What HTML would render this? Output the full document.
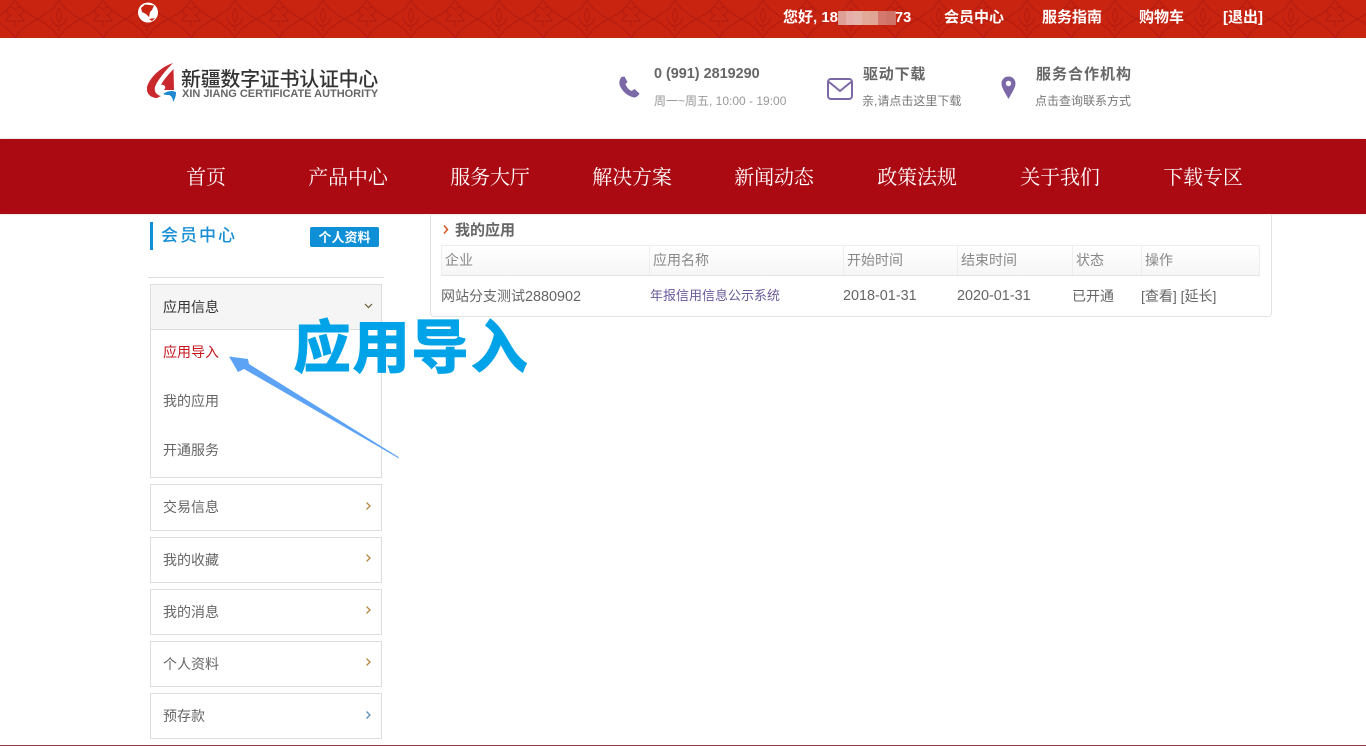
<!DOCTYPE html>
<html lang="zh-CN"><head><meta charset="utf-8"><title>我的应用</title>
<style>
*{box-sizing:border-box;margin:0;padding:0}
html,body{width:1366px;height:746px;overflow:hidden;background:#fff;font-family:"Liberation Sans","Noto Sans CJK SC",sans-serif;color:#666}
.a{position:absolute;white-space:nowrap}
.tl{color:#fff;font-size:15px;font-weight:bold;top:8px;line-height:20px}
#nav{left:0;top:139px;width:1366px;height:75px;background:#ab0a13;box-shadow:0 0 2px #ccc}
.n{top:164px;color:#fff;font:20px/28px "Liberation Serif","Noto Serif CJK SC",serif;width:100px;text-align:center;letter-spacing:-.1px}
.side{left:150px;width:232px;border:1px solid #ddd;background:#fff}
.s{left:163px;font-size:14px;line-height:20px;color:#666}
.th{top:251px;font-size:14px;line-height:18px;color:#888}
.td{top:287px;font-size:14px;line-height:18px;color:#666}
.sep{top:246px;width:1px;height:29px;background:#eee}
</style></head><body>
<svg class="a" style="left:0;top:0" width="1366" height="38"><defs><pattern id="p" width="88" height="38" patternUnits="userSpaceOnUse">
<g fill="none" stroke="#b51c10" stroke-width="1.200"><path d="M-29 38C-20 20 5 18 15 0C25 18 50 20 59 38C68 20 93 18 103 0M-29 0C-20 18 5 20 15 38C25 20 50 18 59 0C68 18 93 20 103 38"/>
<path d="M15 10c-3-4-8-3-8 1 0 3 3 4 5 4-3 1-5 3-6 6h18c-1-3-3-5-6-6 2 0 5-1 5-4 0-4-5-5-8-1zM15 21v6"/>
<path d="M59 8c-3 5-3 10 0 14 3-4 3-9 0-14zM51 17c1 5 4 8 8 9 4-1 7-4 8-9M59 26v5"/></g></pattern></defs>
<rect width="1366" height="38" fill="#c9240f"/><rect width="1366" height="38" fill="url(#p)"/></svg>
<svg class="a" style="left:138px;top:2px" width="20" height="21" viewBox="0 0 20 21"><circle cx="10" cy="10.500" r="10" fill="#fff"/><path d="M3 6L7 2.500 16 3.500 14 8 12 10 11 15 8 12 4 10ZM11 17L17 16 14 19Z" fill="#c8230f"/></svg>
<div class="a tl" style="left:783px">您好, 18</div>
<div class="a" style="left:838px;top:11px;width:58px;height:14px;background:linear-gradient(90deg,#dd9e96 0 8px,#e5aea8 8px 16px,#e4b4ab 16px 24px,#e2a898 24px 32px,#e0a595 32px 40px,#d4776c 40px 48px,#cf7268 48px)"></div>
<div class="a tl" style="left:895px;font-size:14.500px">73</div>
<div class="a tl" style="left:944px">会员中心</div>
<div class="a tl" style="left:1042px">服务指南</div>
<div class="a tl" style="left:1139px">购物车</div>
<div class="a tl" style="left:1223px">[退出]</div>

<svg class="a" style="left:147px;top:63px" width="30" height="40" viewBox="0 0 30 40"><path d="M26 0C14 4 3 14 0 24-1 30 3 35 10 35L14 33C9 32 7 28 8 24 10 18 18 8 26 0Z" fill="#c9282d"/><path d="M26.500 6L27 27H17C20 24 17 21 14 22 17 16 22 11 26.500 6Z" fill="#c9282d"/><path d="M16 31c4-3 9-4 13-2 0 4-1 7-3 10 0-3-1-6-4-7-2 0-4 0-6-1z" fill="#1e87d0"/></svg>
<div class="a" style="left:181px;top:68px;font-size:20px;line-height:24px;color:#333;font-weight:500;letter-spacing:-.3px">新疆数字证书认证中心</div>
<div class="a" style="left:182px;top:88px;font-size:11px;line-height:12px;font-weight:bold;color:#666;letter-spacing:-.02px">XIN JIANG CERTIFICATE AUTHORITY</div>

<svg class="a" style="left:618px;top:76px" width="22" height="22" viewBox="0 0 22 22"><path d="M3.500 1C1 4 .5 8 3 12 6 17 11 20.500 16 21.500 18 21.500 20.500 20 21.500 17.500L16.500 13 13.500 15C10.500 13.500 8.500 11 7.500 8L9.500 6 6.500 .5Z" fill="#7b68a6"/></svg>
<div class="a" style="left:654px;top:65px;font-size:14.400px;line-height:18px;font-weight:bold;color:#666">0 (991) 2819290</div>
<div class="a" style="left:654px;top:92px;font-size:12px;line-height:18px;color:#999">周一~周五, 10:00 - 19:00</div>
<svg class="a" style="left:827px;top:78px" width="26" height="22" viewBox="0 0 26 22"><rect x="1" y="1" width="24" height="20" rx="3" fill="none" stroke="#7b68a6" stroke-width="2"/><path d="M2 4l11 9 11-9" fill="none" stroke="#7b68a6" stroke-width="2"/></svg>
<div class="a" style="left:863px;top:66px;font-size:15px;line-height:18px;font-weight:bold;color:#666;letter-spacing:.8px">驱动下载</div>
<div class="a" style="left:862px;top:92px;font-size:12px;line-height:18px;color:#777">亲,请点击这里下载</div>
<svg class="a" style="left:1001px;top:76px" width="15" height="24" viewBox="0 0 15 24"><path d="M7.500 .5C3 .5 .5 4 .5 7.500c0 4 4 10 7 15.500 3-5.500 7-11.500 7-15.500C14.500 4 12 .5 7.500 .5z" fill="#7b68a6"/><circle cx="7.500" cy="7.500" r="2.700" fill="#fff"/></svg>
<div class="a" style="left:1036px;top:66px;font-size:15px;line-height:18px;font-weight:bold;color:#666;letter-spacing:1px">服务合作机构</div>
<div class="a" style="left:1035px;top:92px;font-size:12px;line-height:18px;color:#777">点击查询联系方式</div>

<div class="a" id="nav"></div>
<div class="a n" style="left:156px">首页</div>
<div class="a n" style="left:298px">产品中心</div>
<div class="a n" style="left:440px">服务大厅</div>
<div class="a n" style="left:582px">解决方案</div>
<div class="a n" style="left:724px">新闻动态</div>
<div class="a n" style="left:867px">政策法规</div>
<div class="a n" style="left:1010px">关于我们</div>
<div class="a n" style="left:1153px">下载专区</div>

<div class="a" style="left:150px;top:222px;width:3px;height:28px;background:#0f8fd5"></div>
<div class="a" style="left:161px;top:225px;font-size:17px;line-height:22px;color:#1a8fd6;letter-spacing:2px;font-weight:500">会员中心</div>
<div class="a" style="left:310px;top:227px;width:69px;height:20px;background:#0f8fd5;border-radius:2px;color:#fff;font-size:13px;font-weight:bold;line-height:21px;text-align:center">个人资料</div>
<div class="a" style="left:148px;top:277px;width:236px;height:1px;background:#ddd"></div>

<div class="a side" style="top:284px;height:194px"></div>
<div class="a" style="left:151px;top:285px;width:230px;height:45px;background:#f5f5f5;border-bottom:1px solid #ddd"></div>
<div class="a s" style="top:297px;color:#333">应用信息</div>
<svg class="a" style="left:364px;top:303px" width="9" height="6"><path d="M1 1l3.500 3.500L8 1" fill="none" stroke="#6a5a35" stroke-width="1.200"/></svg>
<div class="a s" style="top:342px;color:#c4161c">应用导入</div>
<div class="a s" style="top:391px">我的应用</div>
<div class="a s" style="top:440px">开通服务</div>

<div class="a side" style="top:484px;height:47px"></div><div class="a s" style="top:497px">交易信息</div>
<div class="a side" style="top:537px;height:46px"></div><div class="a s" style="top:550px">我的收藏</div>
<div class="a side" style="top:589px;height:46px"></div><div class="a s" style="top:602px">我的消息</div>
<div class="a side" style="top:641px;height:46px"></div><div class="a s" style="top:654px">个人资料</div>
<div class="a side" style="top:693px;height:46px"></div><div class="a s" style="top:706px">预存款</div>
<svg class="a" style="left:365px;top:501px" width="7" height="10"><path d="M1.500 1.500l3.500 3.500-3.500 3.500" fill="none" stroke="#b98a45" stroke-width="1.300"/></svg>
<svg class="a" style="left:365px;top:553px" width="7" height="10"><path d="M1.500 1.500l3.500 3.500-3.500 3.500" fill="none" stroke="#b98a45" stroke-width="1.300"/></svg>
<svg class="a" style="left:365px;top:605px" width="7" height="10"><path d="M1.500 1.500l3.500 3.500-3.500 3.500" fill="none" stroke="#b98a45" stroke-width="1.300"/></svg>
<svg class="a" style="left:365px;top:657px" width="7" height="10"><path d="M1.500 1.500l3.500 3.500-3.500 3.500" fill="none" stroke="#b98a45" stroke-width="1.300"/></svg>
<svg class="a" style="left:365px;top:710px" width="7" height="10"><path d="M1.500 1.500l3.500 3.500-3.500 3.500" fill="none" stroke="#5a8fb5" stroke-width="1.300"/></svg>
<div class="a" style="left:0;top:745px;width:1366px;height:1px;background:#8f3a3a"></div>

<div class="a" style="left:430px;top:214px;width:842px;height:103px;border:1px solid #e3e3e3;border-top:0;border-radius:0 0 4px 4px"></div>
<svg class="a" style="left:443px;top:225px" width="6" height="9"><path d="M1 .5l3.500 4L1 8.500" fill="none" stroke="#d9541e" stroke-width="1.500"/></svg>
<div class="a" style="left:455px;top:222px;font-size:15px;line-height:18px;font-weight:bold;color:#666">我的应用</div>
<div class="a" style="left:441px;top:245px;width:819px;height:31px;border:1px solid #eee;border-bottom:1px solid #e4e4e4;background:linear-gradient(#fff,#f6f6f6)"></div>
<div class="a sep" style="left:649px"></div><div class="a sep" style="left:843px"></div><div class="a sep" style="left:957px"></div><div class="a sep" style="left:1072px"></div><div class="a sep" style="left:1141px"></div>
<div class="a th" style="left:445px">企业</div>
<div class="a th" style="left:653px">应用名称</div>
<div class="a th" style="left:847px">开始时间</div>
<div class="a th" style="left:961px">结束时间</div>
<div class="a th" style="left:1076px">状态</div>
<div class="a th" style="left:1145px">操作</div>
<div class="a td" style="left:441px">网站分支测试<span style="font-size:14.400px">2880902</span></div>
<div class="a td" style="left:650px;font-size:13px;color:#6a5a9a">年报信用信息公示系统</div>
<div class="a td" style="left:843px;font-size:14.400px">2018-01-31</div>
<div class="a td" style="left:957px;font-size:14.400px">2020-01-31</div>
<div class="a td" style="left:1072px">已开通</div>
<div class="a td" style="left:1141px">[查看] [延长]</div>

<div class="a" style="left:293px;top:313px;font-size:58px;line-height:72px;font-weight:900;color:#00a2e8;letter-spacing:1px">应用导入</div>
<svg class="a" style="left:225px;top:350px" width="180" height="112" viewBox="0 0 180 112"><path d="M4 6.500L23 9 24 14 173.500 107 174 108.500 19 19 13 22Z" fill="#5ca2f5"/></svg>
</body></html>
